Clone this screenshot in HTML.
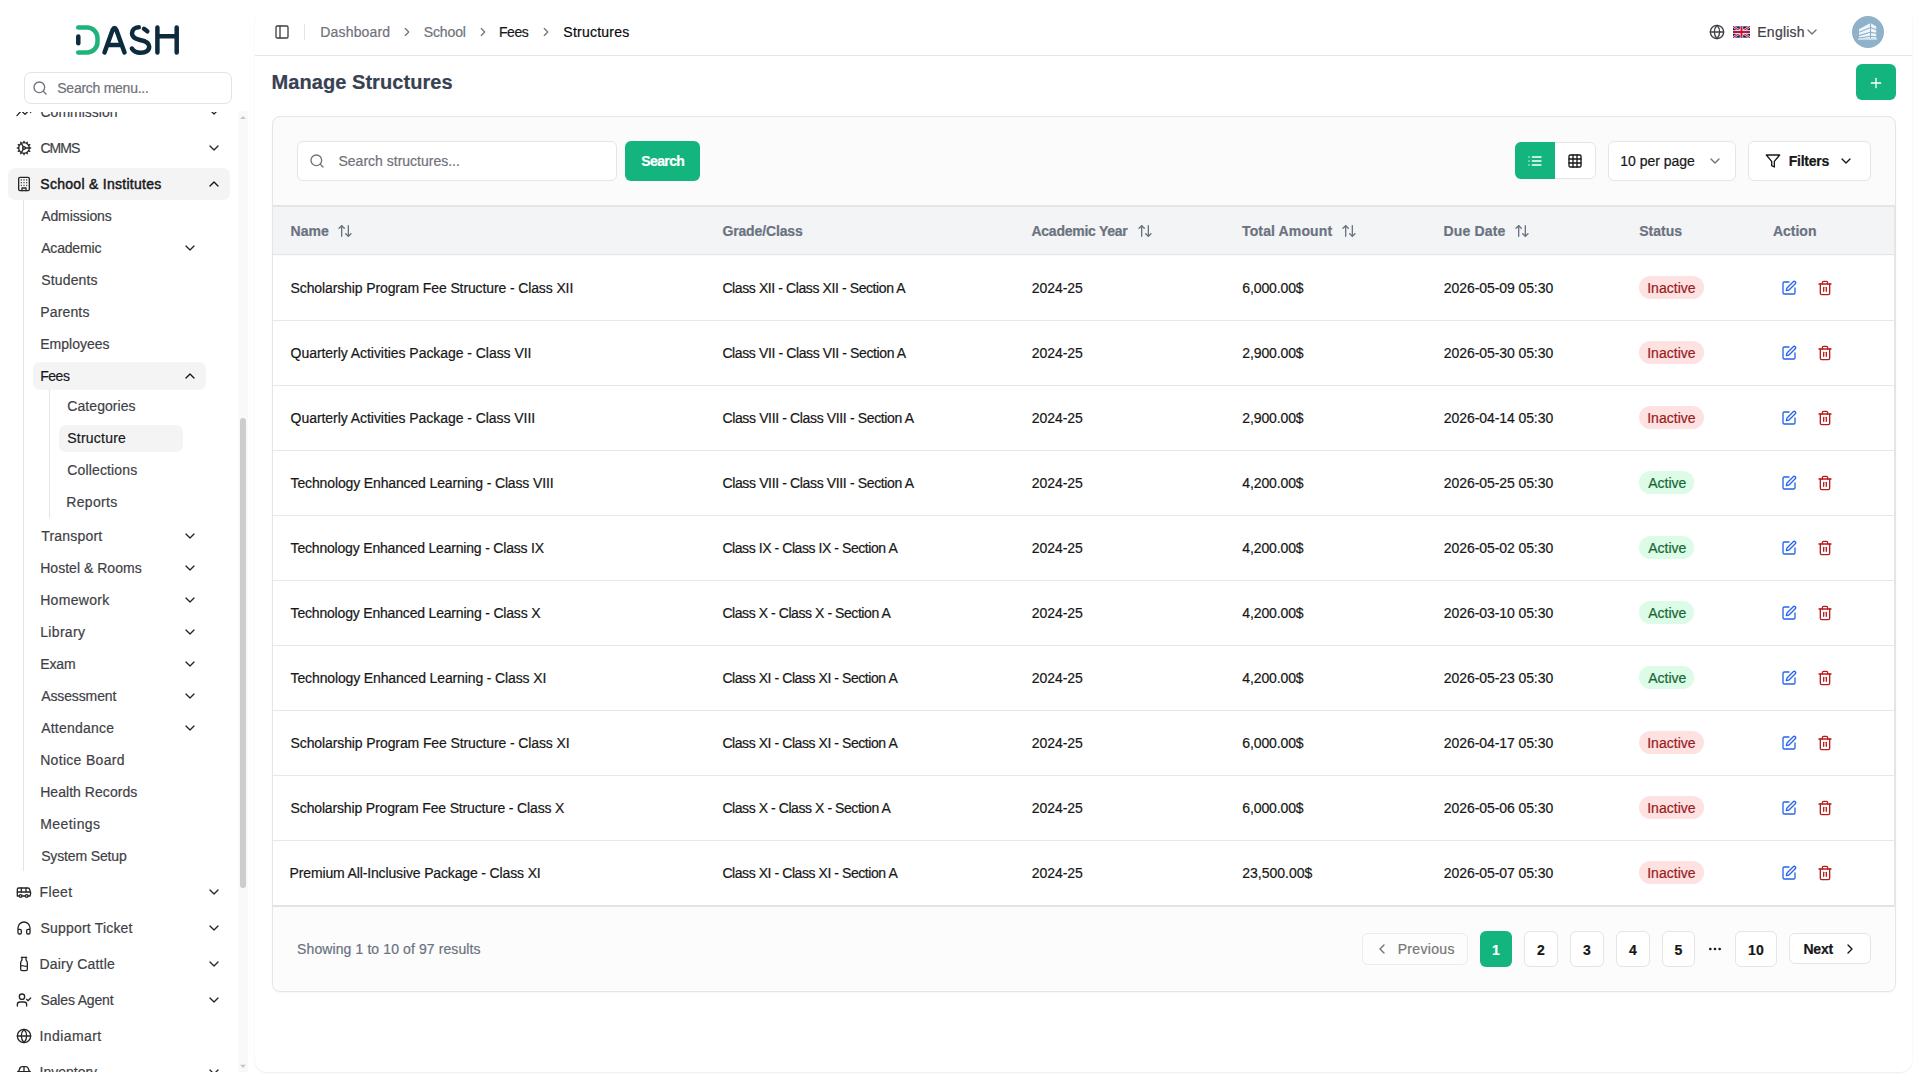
<!DOCTYPE html>
<html><head><meta charset="utf-8"><title>Manage Structures</title>
<style>
*{box-sizing:border-box;margin:0;padding:0}
html,body{width:1920px;height:1080px;overflow:hidden;background:#fff;font-family:"Liberation Sans",sans-serif;font-size:14px;color:#0a0a0a}
svg{display:block}
.abs{position:absolute}
.ic{fill:none;stroke:currentColor;stroke-width:2;stroke-linecap:round;stroke-linejoin:round}
/* sidebar */
#sb{position:absolute;left:0;top:0;width:255px;height:1080px;background:#fff}
#logo{position:absolute;left:0;top:0}
#msearch{position:absolute;left:24px;top:72px;width:208px;height:32px;border:1px solid #e4e4e7;border-radius:7px;background:#fff}
#msearch .ph{position:absolute;left:32px;top:7px;color:#71717a;font-size:14px}
#nav{position:absolute;left:0;top:112px;width:236px;height:960px;overflow:hidden}
.it{position:absolute;height:32px;line-height:32px;white-space:nowrap;color:#3f3f46}
.it .t{position:absolute;top:0}
.hl{background:#f4f4f5;border-radius:7px}
.l0 .t{left:32px}
.l0{left:8px;width:222px}
.l0 .i{position:absolute;left:8px;top:8px;width:16px;height:16px;color:#27272a}
.l0 .ch{position:absolute;left:198px;top:8px;width:16px;height:16px;color:#3f3f46}
.l1{left:33px;width:173px;height:28px;line-height:28px}
.l1 .t{left:8px}
.l1 .ch{position:absolute;left:148px;top:6px;width:16px;height:16px;color:#3f3f46}
.l2{left:59px;width:124px;height:27px;line-height:27px}
.l2 .t{left:8px}
.vline{position:absolute;width:1px;background:#e4e4e7}
#track{position:absolute;left:238px;top:111px;width:10px;height:961px;background:#f9f9f9}
#thumb{position:absolute;left:240px;top:418px;width:6px;height:470px;background:#cdcdcf;border-radius:3px}
/* main */
#main{position:absolute;left:255px;top:8px;width:1657px;height:1064px;background:#fff;border-radius:12px;box-shadow:0 1px 2px rgba(0,0,0,.08)}
#hdr{position:absolute;left:0;top:0;width:1657px;height:48px;border-bottom:1px solid #e5e5e5}
.bc{position:absolute;top:15px;font-size:14px;line-height:18px;color:#71717a;white-space:nowrap}
.tx{position:absolute;white-space:nowrap;-webkit-text-stroke:0.2px currentColor}
#layer{position:absolute;left:0;top:0;width:1920px;height:1080px}
</style></head>
<body>
<div id="sb">
  <svg id="logo" width="255" height="70" viewBox="0 0 255 70">
    <g fill="none" stroke-linecap="round" stroke-linejoin="round" stroke-width="4.5">
      <path d="M78.2 27.5 H87 A10.5 10.5 0 0 1 97.5 38 V42 A10.5 10.5 0 0 1 87 52.5 H78.2" stroke="#1fb27d"/>
      <path d="M78.3 36.4 V43.2" stroke="#0c2b3e"/>
      <path d="M104.5 52.5 L112.6 30 Q114.5 26.2 116.4 30 L124.5 52.5 M109.3 44.9 H119.7" stroke="#0c2b3e"/>
      <path d="M138.8 27.3 C134.5 27.4 132 30 132 33.5 C132 37.5 135.5 39 140 40 C145 41 149.2 42.5 149.2 46.5 C149.2 50.5 146 52.8 140.5 52.8 C136.5 52.8 133.5 51 131.9 48.5" stroke="#0c2b3e"/>
      <path d="M144 28.8 L147.3 31.3" stroke="#0c2b3e"/>
      <path d="M157.4 27.4 V52.6 M176.7 27.4 V52.6 M157.4 36.3 H176.7" stroke="#0c2b3e"/>
    </g>
  </svg>
  <div id="msearch">
    <svg class="abs ic" style="left:7px;top:7px;color:#71717a" width="16" height="16" viewBox="0 0 24 24"><circle cx="11" cy="11" r="8"/><path d="m21 21-4.3-4.3"/></svg>
    
  </div>
  <div id="nav">
    <svg class="ic abs" style="left:16px;top:-8px;color:#27272a;" width="16" height="16" viewBox="0 0 24 24" stroke-width="2"><path d="M1.4 17.4 L7.6 10.6"/><path d="M8.6 10.6 L13.5 15.6 L18.4 10.6"/><path d="M21.9 12.8h.01"/></svg>
<div class="tx" style="left:40.50px;top:-10.05px;font-size:14px;line-height:20px;font-weight:400;color:#3f3f46;">Commission</div>
<svg class="ic abs" style="left:206px;top:-8px;color:#27272a;" width="16" height="16" viewBox="0 0 24 24" stroke-width="2"><path d="m6 9 6 6 6-6"/></svg>
<svg class="ic abs" style="left:16px;top:28px;color:#27272a;" width="16" height="16" viewBox="0 0 24 24" stroke-width="2"><path d="M12 20a8 8 0 1 0 0-16 8 8 0 0 0 0 16Z"/><path d="M12 14a2 2 0 1 0 0-4 2 2 0 0 0 0 4Z"/><path d="M12 2v2"/><path d="M12 22v-2"/><path d="m17 20.66-1-1.73"/><path d="M11 10.27 7 3.34"/><path d="m20.66 17-1.73-1"/><path d="m3.34 7 1.73 1"/><path d="M14 12h8"/><path d="M2 12h2"/><path d="m20.66 7-1.73 1"/><path d="m3.34 17 1.73-1"/><path d="m17 3.34-1 1.73"/><path d="m11 13.73-4 6.93"/></svg>
<div class="tx" style="left:40.50px;top:25.95px;font-size:14px;line-height:20px;font-weight:400;color:#3f3f46;letter-spacing:-1.012px;">CMMS</div>
<svg class="ic abs" style="left:206px;top:28px;color:#27272a;" width="16" height="16" viewBox="0 0 24 24" stroke-width="2"><path d="m6 9 6 6 6-6"/></svg>
<div class="abs" style="left:8px;top:56px;width:222px;height:32px;background:#f4f4f5;border-radius:7px"></div>
<svg class="ic abs" style="left:16px;top:64px;color:#27272a;" width="16" height="16" viewBox="0 0 24 24" stroke-width="2"><rect width="16" height="20" x="4" y="2" rx="2" ry="2"/><path d="M9 22v-4h6v4"/><path d="M8 6h.01"/><path d="M16 6h.01"/><path d="M12 6h.01"/><path d="M12 10h.01"/><path d="M12 14h.01"/><path d="M16 10h.01"/><path d="M16 14h.01"/><path d="M8 10h.01"/><path d="M8 14h.01"/></svg>
<div class="tx" style="left:40.30px;top:61.95px;font-size:14px;line-height:20px;font-weight:400;color:#18181b;letter-spacing:0.280px;-webkit-text-stroke:0.45px #18181b;">School &amp; Institutes</div>
<svg class="ic abs" style="left:206px;top:64px;color:#18181b;" width="16" height="16" viewBox="0 0 24 24" stroke-width="2"><path d="m18 15-6-6-6 6"/></svg>
<div class="tx" style="left:41.20px;top:93.95px;font-size:14px;line-height:20px;font-weight:400;color:#3f3f46;letter-spacing:-0.109px;">Admissions</div>
<div class="tx" style="left:41.20px;top:125.95px;font-size:14px;line-height:20px;font-weight:400;color:#3f3f46;letter-spacing:-0.181px;">Academic</div>
<svg class="ic abs" style="left:182px;top:128px;color:#27272a;" width="16" height="16" viewBox="0 0 24 24" stroke-width="2"><path d="m6 9 6 6 6-6"/></svg>
<div class="tx" style="left:41.20px;top:157.95px;font-size:14px;line-height:20px;font-weight:400;color:#3f3f46;letter-spacing:0.163px;">Students</div>
<div class="tx" style="left:40.20px;top:189.95px;font-size:14px;line-height:20px;font-weight:400;color:#3f3f46;letter-spacing:0.159px;">Parents</div>
<div class="tx" style="left:40.20px;top:221.95px;font-size:14px;line-height:20px;font-weight:400;color:#3f3f46;letter-spacing:0.018px;">Employees</div>
<div class="abs" style="left:33px;top:250px;width:173px;height:28px;background:#f4f4f5;border-radius:7px"></div>
<div class="tx" style="left:40.20px;top:253.95px;font-size:14px;line-height:20px;font-weight:400;color:#18181b;letter-spacing:-0.475px;">Fees</div>
<svg class="ic abs" style="left:182px;top:256px;color:#18181b;" width="16" height="16" viewBox="0 0 24 24" stroke-width="2"><path d="m18 15-6-6-6 6"/></svg>
<div class="tx" style="left:67.30px;top:283.95px;font-size:14px;line-height:20px;font-weight:400;color:#3f3f46;letter-spacing:0.066px;">Categories</div>
<div class="abs" style="left:59px;top:312.5px;width:124px;height:27px;background:#f4f4f5;border-radius:7px"></div>
<div class="tx" style="left:67.30px;top:315.95px;font-size:14px;line-height:20px;font-weight:400;color:#18181b;letter-spacing:0.223px;">Structure</div>
<div class="tx" style="left:67.30px;top:347.95px;font-size:14px;line-height:20px;font-weight:400;color:#3f3f46;letter-spacing:0.142px;">Collections</div>
<div class="tx" style="left:66.30px;top:379.95px;font-size:14px;line-height:20px;font-weight:400;color:#3f3f46;letter-spacing:0.330px;">Reports</div>
<div class="tx" style="left:41.20px;top:413.95px;font-size:14px;line-height:20px;font-weight:400;color:#3f3f46;letter-spacing:0.200px;">Transport</div>
<svg class="ic abs" style="left:182px;top:416px;color:#27272a;" width="16" height="16" viewBox="0 0 24 24" stroke-width="2"><path d="m6 9 6 6 6-6"/></svg>
<div class="tx" style="left:40.20px;top:445.95px;font-size:14px;line-height:20px;font-weight:400;color:#3f3f46;letter-spacing:0.027px;">Hostel &amp; Rooms</div>
<svg class="ic abs" style="left:182px;top:448px;color:#27272a;" width="16" height="16" viewBox="0 0 24 24" stroke-width="2"><path d="m6 9 6 6 6-6"/></svg>
<div class="tx" style="left:40.20px;top:477.95px;font-size:14px;line-height:20px;font-weight:400;color:#3f3f46;letter-spacing:0.300px;">Homework</div>
<svg class="ic abs" style="left:182px;top:480px;color:#27272a;" width="16" height="16" viewBox="0 0 24 24" stroke-width="2"><path d="m6 9 6 6 6-6"/></svg>
<div class="tx" style="left:40.20px;top:509.95px;font-size:14px;line-height:20px;font-weight:400;color:#3f3f46;letter-spacing:0.335px;">Library</div>
<svg class="ic abs" style="left:182px;top:512px;color:#27272a;" width="16" height="16" viewBox="0 0 24 24" stroke-width="2"><path d="m6 9 6 6 6-6"/></svg>
<div class="tx" style="left:40.20px;top:541.95px;font-size:14px;line-height:20px;font-weight:400;color:#3f3f46;letter-spacing:-0.141px;">Exam</div>
<svg class="ic abs" style="left:182px;top:544px;color:#27272a;" width="16" height="16" viewBox="0 0 24 24" stroke-width="2"><path d="m6 9 6 6 6-6"/></svg>
<div class="tx" style="left:41.20px;top:573.95px;font-size:14px;line-height:20px;font-weight:400;color:#3f3f46;letter-spacing:-0.118px;">Assessment</div>
<svg class="ic abs" style="left:182px;top:576px;color:#27272a;" width="16" height="16" viewBox="0 0 24 24" stroke-width="2"><path d="m6 9 6 6 6-6"/></svg>
<div class="tx" style="left:41.20px;top:605.95px;font-size:14px;line-height:20px;font-weight:400;color:#3f3f46;letter-spacing:0.228px;">Attendance</div>
<svg class="ic abs" style="left:182px;top:608px;color:#27272a;" width="16" height="16" viewBox="0 0 24 24" stroke-width="2"><path d="m6 9 6 6 6-6"/></svg>
<div class="tx" style="left:40.20px;top:637.95px;font-size:14px;line-height:20px;font-weight:400;color:#3f3f46;letter-spacing:0.305px;">Notice Board</div>
<div class="tx" style="left:40.20px;top:669.95px;font-size:14px;line-height:20px;font-weight:400;color:#3f3f46;letter-spacing:0.047px;">Health Records</div>
<div class="tx" style="left:40.20px;top:701.95px;font-size:14px;line-height:20px;font-weight:400;color:#3f3f46;letter-spacing:0.442px;">Meetings</div>
<div class="tx" style="left:41.20px;top:733.95px;font-size:14px;line-height:20px;font-weight:400;color:#3f3f46;letter-spacing:-0.151px;">System Setup</div>
<svg class="ic abs" style="left:16px;top:772px;color:#27272a;" width="16" height="16" viewBox="0 0 24 24" stroke-width="2"><path d="M8 6v6"/><path d="M15 6v6"/><path d="M2 12h19.6"/><path d="M18 18h3s.5-1.7.8-2.8c.1-.4.2-.8.2-1.2 0-.4-.1-.8-.2-1.2l-1.4-5C20.1 6.8 19.1 6 18 6H4a2 2 0 0 0-2 2v10h3"/><circle cx="7" cy="18" r="2"/><path d="M9 18h5"/><circle cx="16" cy="18" r="2"/></svg>
<div class="tx" style="left:39.50px;top:769.95px;font-size:14px;line-height:20px;font-weight:400;color:#3f3f46;letter-spacing:0.391px;">Fleet</div>
<svg class="ic abs" style="left:206px;top:772px;color:#27272a;" width="16" height="16" viewBox="0 0 24 24" stroke-width="2"><path d="m6 9 6 6 6-6"/></svg>
<svg class="ic abs" style="left:16px;top:808px;color:#27272a;" width="16" height="16" viewBox="0 0 24 24" stroke-width="2"><path d="M3 14h3a2 2 0 0 1 2 2v3a2 2 0 0 1-2 2H5a2 2 0 0 1-2-2v-7a9 9 0 0 1 18 0v7a2 2 0 0 1-2 2h-1a2 2 0 0 1-2-2v-3a2 2 0 0 1 2-2h3"/></svg>
<div class="tx" style="left:40.50px;top:805.95px;font-size:14px;line-height:20px;font-weight:400;color:#3f3f46;letter-spacing:0.188px;">Support Ticket</div>
<svg class="ic abs" style="left:206px;top:808px;color:#27272a;" width="16" height="16" viewBox="0 0 24 24" stroke-width="2"><path d="m6 9 6 6 6-6"/></svg>
<svg class="ic abs" style="left:16px;top:844px;color:#27272a;" width="16" height="16" viewBox="0 0 24 24" stroke-width="2"><path d="M8 2h8"/><path d="M9 2v2.789a4 4 0 0 1-.672 2.219l-.656.984A4 4 0 0 0 7 10.212V20a2 2 0 0 0 2 2h6a2 2 0 0 0 2-2v-9.789a4 4 0 0 0-.672-2.219l-.656-.984A4 4 0 0 1 15 4.788V2"/><path d="M7 15a6.472 6.472 0 0 1 5 0 6.47 6.47 0 0 0 5 0"/></svg>
<div class="tx" style="left:39.50px;top:841.95px;font-size:14px;line-height:20px;font-weight:400;color:#3f3f46;letter-spacing:0.196px;">Dairy Cattle</div>
<svg class="ic abs" style="left:206px;top:844px;color:#27272a;" width="16" height="16" viewBox="0 0 24 24" stroke-width="2"><path d="m6 9 6 6 6-6"/></svg>
<svg class="ic abs" style="left:16px;top:880px;color:#27272a;" width="16" height="16" viewBox="0 0 24 24" stroke-width="2"><path d="M16 21v-2a4 4 0 0 0-4-4H6a4 4 0 0 0-4 4v2"/><circle cx="9" cy="7" r="4"/><polyline points="16 11 18 13 22 9"/></svg>
<div class="tx" style="left:40.50px;top:877.95px;font-size:14px;line-height:20px;font-weight:400;color:#3f3f46;letter-spacing:-0.161px;">Sales Agent</div>
<svg class="ic abs" style="left:206px;top:880px;color:#27272a;" width="16" height="16" viewBox="0 0 24 24" stroke-width="2"><path d="m6 9 6 6 6-6"/></svg>
<svg class="ic abs" style="left:16px;top:916px;color:#27272a;" width="16" height="16" viewBox="0 0 24 24" stroke-width="2"><circle cx="12" cy="12" r="10"/><path d="M12 2a14.5 14.5 0 0 0 0 20 14.5 14.5 0 0 0 0-20"/><path d="M2 12h20"/></svg>
<div class="tx" style="left:39.50px;top:913.95px;font-size:14px;line-height:20px;font-weight:400;color:#3f3f46;letter-spacing:0.404px;">Indiamart</div>
<svg class="ic abs" style="left:16px;top:952px;color:#27272a;" width="16" height="16" viewBox="0 0 24 24" stroke-width="2"><path d="M6 6 Q7 4 9 4 H15 Q17 4 18 6 L20.5 12"/><path d="M3.5 12 L6 6"/><path d="M3 11.5 H21"/><path d="M12 4 V11.5"/><path d="M3 11 V14 M21 11 V14"/></svg>
<div class="tx" style="left:39.50px;top:949.95px;font-size:14px;line-height:20px;font-weight:400;color:#3f3f46;">Inventory</div>
<svg class="ic abs" style="left:206px;top:952px;color:#27272a;" width="16" height="16" viewBox="0 0 24 24" stroke-width="2"><path d="m6 9 6 6 6-6"/></svg>
<div class="abs" style="left:23px;top:88px;width:1px;height:671px;background:#e4e4e7"></div>
<div class="abs" style="left:49px;top:278px;width:1px;height:128px;background:#e4e4e7"></div>
  </div>
  <div id="track"></div>
  <div id="thumb"></div>
  <svg class="abs" style="left:238px;top:109px" width="10" height="963" viewBox="0 0 10 963"><path d="M2.2 10.1 L5 7 L7.8 10.1 Z" fill="#c4c4c4"/><path d="M2.2 955.8 L5 958.9 L7.8 955.8 Z" fill="#c4c4c4"/></svg>
</div>
<div id="main">
  <div id="hdr">
    <!-- HDR -->
  </div>
  
</div>
<div id="layer"><div class="tx" style="left:57.30px;top:77.65px;font-size:14px;line-height:20px;font-weight:400;color:#71717a;letter-spacing:-0.265px;">Search menu...</div>
<svg class="ic abs" style="left:274px;top:24px;color:#3f3f46;" width="16" height="16" viewBox="0 0 24 24" stroke-width="2"><rect width="18" height="18" x="3" y="3" rx="2"/><path d="M9 3v18"/></svg>
<div class="abs" style="left:304px;top:24px;width:1px;height:16px;background:#e4e4e7"></div>
<div class="tx" style="left:320.30px;top:22.45px;font-size:14px;line-height:20px;font-weight:400;color:#71717a;letter-spacing:0.162px;">Dashboard</div>
<svg class="ic abs" style="left:400px;top:25px;color:#71717a;" width="14" height="14" viewBox="0 0 24 24" stroke-width="2"><path d="m9 18 6-6-6-6"/></svg>
<div class="tx" style="left:423.80px;top:22.45px;font-size:14px;line-height:20px;font-weight:400;color:#71717a;letter-spacing:-0.139px;">School</div>
<svg class="ic abs" style="left:476px;top:25px;color:#71717a;" width="14" height="14" viewBox="0 0 24 24" stroke-width="2"><path d="m9 18 6-6-6-6"/></svg>
<div class="tx" style="left:499.00px;top:22.45px;font-size:14px;line-height:20px;font-weight:400;color:#18181b;letter-spacing:-0.475px;">Fees</div>
<svg class="ic abs" style="left:539px;top:25px;color:#71717a;" width="14" height="14" viewBox="0 0 24 24" stroke-width="2"><path d="m9 18 6-6-6-6"/></svg>
<div class="tx" style="left:563.30px;top:22.45px;font-size:14px;line-height:20px;font-weight:400;color:#0a0a0a;letter-spacing:0.244px;">Structures</div>
<svg class="ic abs" style="left:1708.8px;top:24.3px;color:#3f3f46;" width="16" height="16" viewBox="0 0 24 24" stroke-width="2"><circle cx="12" cy="12" r="10"/><path d="M12 2a14.5 14.5 0 0 0 0 20 14.5 14.5 0 0 0 0-20"/><path d="M2 12h20"/></svg>
<svg class="abs" style="left:1733px;top:26px" width="17" height="12" viewBox="0 0 60 40"><rect width="60" height="40" fill="#012169"/><path d="M0 0L60 40M60 0L0 40" stroke="#fff" stroke-width="8"/><path d="M0 0L60 40M60 0L0 40" stroke="#C8102E" stroke-width="4"/><path d="M30 0V40M0 20H60" stroke="#fff" stroke-width="12"/><path d="M30 0V40M0 20H60" stroke="#C8102E" stroke-width="7"/></svg>
<div class="tx" style="left:1757.30px;top:22.45px;font-size:14px;line-height:20px;font-weight:400;color:#3f3f46;letter-spacing:0.228px;">English</div>
<svg class="ic abs" style="left:1804.3px;top:23.7px;color:#71717a;" width="16" height="16" viewBox="0 0 24 24" stroke-width="1.5"><path d="m6 9 6 6 6-6"/></svg>
<svg class="abs" style="left:1852px;top:16px" width="32" height="32" viewBox="0 0 32 32"><circle cx="16" cy="16" r="16" fill="#8fb1c9"/><path d="M7 13.2 L18.5 7 L24.2 10.4 V22.4 H7 Z" fill="#eef7fb"/><g fill="none" stroke="#8fb1c9" stroke-width="1.1"><path d="M6.5 16.6 L18.5 11.6 L24.5 13.8"/><path d="M6.5 19.6 L18.5 16.2 L24.5 17.4"/><path d="M6.5 22 L18.5 20.2 L24.5 20.8"/><path d="M18.5 7 V22.4"/></g><path d="M6 23.1 H25" stroke="#eef7fb" stroke-width="1"/></svg>
<div class="tx" style="left:271.50px;top:68.57px;font-size:20px;line-height:26px;font-weight:700;color:#374151;letter-spacing:0.067px;">Manage Structures</div>
<div class="abs" style="left:1856px;top:64px;width:40px;height:36px;background:#14b47f;border-radius:6px"></div>
<svg class="ic abs" style="left:1868px;top:75px;color:#fff;" width="16" height="16" viewBox="0 0 24 24" stroke-width="2"><path d="M5 12h14"/><path d="M12 5v14"/></svg>
<div class="abs" style="left:272px;top:116px;width:1624px;height:876px;border:1px solid #e5e5e5;border-radius:8px;background:#fbfbfb;box-shadow:0 1px 2px rgba(0,0,0,.04)"></div>
<div class="abs" style="left:273px;top:907px;width:1622px;height:84px;background:#fcfcfc;border-radius:0 0 7px 7px"></div>
<div class="abs" style="left:297px;top:141px;width:320px;height:40px;background:#fff;border:1px solid #e5e5e5;border-radius:6px"></div>
<svg class="ic abs" style="left:309px;top:153px;color:#71717a;" width="16" height="16" viewBox="0 0 24 24" stroke-width="2"><circle cx="11" cy="11" r="8"/><path d="m21 21-4.3-4.3"/></svg>
<div class="tx" style="left:338.50px;top:151.45px;font-size:14px;line-height:20px;font-weight:400;color:#71717a;">Search structures...</div>
<div class="abs" style="left:625px;top:141px;width:75px;height:40px;background:#14b47f;border-radius:6px"></div>
<div class="tx" style="left:641.30px;top:151.45px;font-size:14px;line-height:20px;font-weight:700;color:#fff;letter-spacing:-0.629px;">Search</div>
<div class="abs" style="left:1515px;top:142px;width:81px;height:37px;background:#fff;border:1px solid #e5e5e5;border-radius:6px"></div>
<div class="abs" style="left:1515px;top:142px;width:40px;height:37px;background:#14b47f;border-radius:6px 0 0 6px"></div>
<svg class="ic abs" style="left:1526.5px;top:152.5px;color:#fff;" width="16" height="16" viewBox="0 0 24 24" stroke-width="2"><path d="M3 12h.01"/><path d="M3 18h.01"/><path d="M3 6h.01"/><path d="M8 12h13"/><path d="M8 18h13"/><path d="M8 6h13"/></svg>
<svg class="ic abs" style="left:1566.5px;top:152.5px;color:#171717;" width="16" height="16" viewBox="0 0 24 24" stroke-width="2.2"><rect width="18" height="18" x="3" y="3" rx="2"/><path d="M3 9h18"/><path d="M3 15h18"/><path d="M9 3v18"/><path d="M15 3v18"/></svg>
<div class="abs" style="left:1608px;top:141px;width:128px;height:40px;background:#fff;border:1px solid #e5e5e5;border-radius:6px"></div>
<div class="tx" style="left:1620.30px;top:151.45px;font-size:14px;line-height:20px;font-weight:400;color:#171717;letter-spacing:-0.024px;">10 per page</div>
<svg class="ic abs" style="left:1706.7px;top:152.6px;color:#71717a;" width="16" height="16" viewBox="0 0 24 24" stroke-width="1.6"><path d="m6 9 6 6 6-6"/></svg>
<div class="abs" style="left:1748px;top:141px;width:123px;height:40px;background:#fff;border:1px solid #e5e5e5;border-radius:6px"></div>
<svg class="ic abs" style="left:1765px;top:152.5px;color:#171717;" width="16" height="16" viewBox="0 0 24 24" stroke-width="2"><polygon points="22 3 2 3 10 12.46 10 19 14 21 14 12.46 22 3"/></svg>
<div class="tx" style="left:1788.70px;top:151.45px;font-size:14px;line-height:20px;font-weight:700;color:#171717;letter-spacing:-0.238px;">Filters</div>
<svg class="ic abs" style="left:1837.5px;top:153px;color:#171717;" width="16" height="16" viewBox="0 0 24 24" stroke-width="2"><path d="m6 9 6 6 6-6"/></svg>
<div class="abs" style="left:273px;top:205px;width:1622px;height:50px;background:#f3f4f6;border-top:2px solid #e5e5e5;border-bottom:1px solid #e5e5e5"></div>
<div class="tx" style="left:290.60px;top:221.45px;font-size:14px;line-height:20px;font-weight:700;color:#6b7280;">Name</div>
<svg class="ic abs" style="left:336.7px;top:222.5px;color:#6b7280;" width="16" height="16" viewBox="0 0 24 24" stroke-width="2"><path d="m21 16-4 4-4-4"/><path d="M17 20V4"/><path d="m3 8 4-4 4 4"/><path d="M7 4v16"/></svg>
<div class="tx" style="left:722.40px;top:221.45px;font-size:14px;line-height:20px;font-weight:700;color:#6b7280;letter-spacing:-0.132px;">Grade/Class</div>
<div class="tx" style="left:1031.50px;top:221.45px;font-size:14px;line-height:20px;font-weight:700;color:#6b7280;letter-spacing:-0.264px;">Academic Year</div>
<svg class="ic abs" style="left:1136.7px;top:222.5px;color:#6b7280;" width="16" height="16" viewBox="0 0 24 24" stroke-width="2"><path d="m21 16-4 4-4-4"/><path d="M17 20V4"/><path d="m3 8 4-4 4 4"/><path d="M7 4v16"/></svg>
<div class="tx" style="left:1242.00px;top:221.45px;font-size:14px;line-height:20px;font-weight:700;color:#6b7280;letter-spacing:0.136px;">Total Amount</div>
<svg class="ic abs" style="left:1340.7px;top:222.5px;color:#6b7280;" width="16" height="16" viewBox="0 0 24 24" stroke-width="2"><path d="m21 16-4 4-4-4"/><path d="M17 20V4"/><path d="m3 8 4-4 4 4"/><path d="M7 4v16"/></svg>
<div class="tx" style="left:1443.50px;top:221.45px;font-size:14px;line-height:20px;font-weight:700;color:#6b7280;letter-spacing:0.158px;">Due Date</div>
<svg class="ic abs" style="left:1513.7px;top:222.5px;color:#6b7280;" width="16" height="16" viewBox="0 0 24 24" stroke-width="2"><path d="m21 16-4 4-4-4"/><path d="M17 20V4"/><path d="m3 8 4-4 4 4"/><path d="M7 4v16"/></svg>
<div class="tx" style="left:1639.20px;top:221.45px;font-size:14px;line-height:20px;font-weight:700;color:#6b7280;">Status</div>
<div class="tx" style="left:1772.90px;top:221.45px;font-size:14px;line-height:20px;font-weight:700;color:#6b7280;">Action</div>
<div class="abs" style="left:273px;top:256px;width:1622px;height:65px;background:#fff;border-bottom:1px solid #e8e8e8"></div>
<div class="tx" style="left:290.60px;top:278.45px;font-size:14px;line-height:20px;font-weight:400;color:#171717;letter-spacing:-0.118px;">Scholarship Program Fee Structure - Class XII</div>
<div class="tx" style="left:722.40px;top:278.45px;font-size:14px;line-height:20px;font-weight:400;color:#171717;letter-spacing:-0.400px;">Class XII - Class XII - Section A</div>
<div class="tx" style="left:1031.80px;top:278.45px;font-size:14px;line-height:20px;font-weight:400;color:#171717;letter-spacing:-0.065px;">2024-25</div>
<div class="tx" style="left:1242.30px;top:278.45px;font-size:14px;line-height:20px;font-weight:400;color:#171717;letter-spacing:-0.125px;">6,000.00$</div>
<div class="tx" style="left:1443.80px;top:278.45px;font-size:14px;line-height:20px;font-weight:400;color:#171717;letter-spacing:-0.077px;">2026-05-09 05:30</div>
<div class="abs" style="left:1639px;top:276px;width:65px;height:23px;background:#fee2e2;border-radius:12px"></div>
<div class="tx" style="left:1647.20px;top:278.45px;font-size:14px;line-height:20px;font-weight:400;color:#991b1b;letter-spacing:0.020px;">Inactive</div>
<svg class="ic abs" style="left:1781px;top:280px;color:#2563eb;" width="16" height="16" viewBox="0 0 24 24" stroke-width="2"><path d="M12 3H5a2 2 0 0 0-2 2v14a2 2 0 0 0 2 2h14a2 2 0 0 0 2-2v-7"/><path d="M18.375 2.625a1 1 0 0 1 3 3l-9.013 9.014a2 2 0 0 1-.853.505l-2.873.84a.5.5 0 0 1-.62-.62l.84-2.873a2 2 0 0 1 .506-.852z"/></svg>
<svg class="ic abs" style="left:1817px;top:280px;color:#b91c1c;" width="16" height="16" viewBox="0 0 24 24" stroke-width="2"><path d="M3 6h18"/><path d="M19 6v14c0 1-1 2-2 2H7c-1 0-2-1-2-2V6"/><path d="M8 6V4c0-1 1-2 2-2h4c1 0 2 1 2 2v2"/><line x1="10" x2="10" y1="11" y2="17"/><line x1="14" x2="14" y1="11" y2="17"/></svg>
<div class="abs" style="left:273px;top:321px;width:1622px;height:65px;background:#fff;border-bottom:1px solid #e8e8e8"></div>
<div class="tx" style="left:290.60px;top:343.45px;font-size:14px;line-height:20px;font-weight:400;color:#171717;letter-spacing:-0.050px;">Quarterly Activities Package - Class VII</div>
<div class="tx" style="left:722.40px;top:343.45px;font-size:14px;line-height:20px;font-weight:400;color:#171717;letter-spacing:-0.384px;">Class VII - Class VII - Section A</div>
<div class="tx" style="left:1031.80px;top:343.45px;font-size:14px;line-height:20px;font-weight:400;color:#171717;letter-spacing:-0.065px;">2024-25</div>
<div class="tx" style="left:1242.30px;top:343.45px;font-size:14px;line-height:20px;font-weight:400;color:#171717;letter-spacing:-0.125px;">2,900.00$</div>
<div class="tx" style="left:1443.80px;top:343.45px;font-size:14px;line-height:20px;font-weight:400;color:#171717;letter-spacing:-0.077px;">2026-05-30 05:30</div>
<div class="abs" style="left:1639px;top:341px;width:65px;height:23px;background:#fee2e2;border-radius:12px"></div>
<div class="tx" style="left:1647.20px;top:343.45px;font-size:14px;line-height:20px;font-weight:400;color:#991b1b;letter-spacing:0.020px;">Inactive</div>
<svg class="ic abs" style="left:1781px;top:345px;color:#2563eb;" width="16" height="16" viewBox="0 0 24 24" stroke-width="2"><path d="M12 3H5a2 2 0 0 0-2 2v14a2 2 0 0 0 2 2h14a2 2 0 0 0 2-2v-7"/><path d="M18.375 2.625a1 1 0 0 1 3 3l-9.013 9.014a2 2 0 0 1-.853.505l-2.873.84a.5.5 0 0 1-.62-.62l.84-2.873a2 2 0 0 1 .506-.852z"/></svg>
<svg class="ic abs" style="left:1817px;top:345px;color:#b91c1c;" width="16" height="16" viewBox="0 0 24 24" stroke-width="2"><path d="M3 6h18"/><path d="M19 6v14c0 1-1 2-2 2H7c-1 0-2-1-2-2V6"/><path d="M8 6V4c0-1 1-2 2-2h4c1 0 2 1 2 2v2"/><line x1="10" x2="10" y1="11" y2="17"/><line x1="14" x2="14" y1="11" y2="17"/></svg>
<div class="abs" style="left:273px;top:386px;width:1622px;height:65px;background:#fff;border-bottom:1px solid #e8e8e8"></div>
<div class="tx" style="left:290.60px;top:408.45px;font-size:14px;line-height:20px;font-weight:400;color:#171717;letter-spacing:-0.053px;">Quarterly Activities Package - Class VIII</div>
<div class="tx" style="left:722.40px;top:408.45px;font-size:14px;line-height:20px;font-weight:400;color:#171717;letter-spacing:-0.358px;">Class VIII - Class VIII - Section A</div>
<div class="tx" style="left:1031.80px;top:408.45px;font-size:14px;line-height:20px;font-weight:400;color:#171717;letter-spacing:-0.065px;">2024-25</div>
<div class="tx" style="left:1242.30px;top:408.45px;font-size:14px;line-height:20px;font-weight:400;color:#171717;letter-spacing:-0.125px;">2,900.00$</div>
<div class="tx" style="left:1443.80px;top:408.45px;font-size:14px;line-height:20px;font-weight:400;color:#171717;letter-spacing:-0.077px;">2026-04-14 05:30</div>
<div class="abs" style="left:1639px;top:406px;width:65px;height:23px;background:#fee2e2;border-radius:12px"></div>
<div class="tx" style="left:1647.20px;top:408.45px;font-size:14px;line-height:20px;font-weight:400;color:#991b1b;letter-spacing:0.020px;">Inactive</div>
<svg class="ic abs" style="left:1781px;top:410px;color:#2563eb;" width="16" height="16" viewBox="0 0 24 24" stroke-width="2"><path d="M12 3H5a2 2 0 0 0-2 2v14a2 2 0 0 0 2 2h14a2 2 0 0 0 2-2v-7"/><path d="M18.375 2.625a1 1 0 0 1 3 3l-9.013 9.014a2 2 0 0 1-.853.505l-2.873.84a.5.5 0 0 1-.62-.62l.84-2.873a2 2 0 0 1 .506-.852z"/></svg>
<svg class="ic abs" style="left:1817px;top:410px;color:#b91c1c;" width="16" height="16" viewBox="0 0 24 24" stroke-width="2"><path d="M3 6h18"/><path d="M19 6v14c0 1-1 2-2 2H7c-1 0-2-1-2-2V6"/><path d="M8 6V4c0-1 1-2 2-2h4c1 0 2 1 2 2v2"/><line x1="10" x2="10" y1="11" y2="17"/><line x1="14" x2="14" y1="11" y2="17"/></svg>
<div class="abs" style="left:273px;top:451px;width:1622px;height:65px;background:#fff;border-bottom:1px solid #e8e8e8"></div>
<div class="tx" style="left:290.60px;top:473.45px;font-size:14px;line-height:20px;font-weight:400;color:#171717;letter-spacing:-0.138px;">Technology Enhanced Learning - Class VIII</div>
<div class="tx" style="left:722.40px;top:473.45px;font-size:14px;line-height:20px;font-weight:400;color:#171717;letter-spacing:-0.358px;">Class VIII - Class VIII - Section A</div>
<div class="tx" style="left:1031.80px;top:473.45px;font-size:14px;line-height:20px;font-weight:400;color:#171717;letter-spacing:-0.065px;">2024-25</div>
<div class="tx" style="left:1242.30px;top:473.45px;font-size:14px;line-height:20px;font-weight:400;color:#171717;letter-spacing:-0.125px;">4,200.00$</div>
<div class="tx" style="left:1443.80px;top:473.45px;font-size:14px;line-height:20px;font-weight:400;color:#171717;letter-spacing:-0.077px;">2026-05-25 05:30</div>
<div class="abs" style="left:1639px;top:471px;width:55px;height:23px;background:#dcfce7;border-radius:12px"></div>
<div class="tx" style="left:1648.20px;top:473.45px;font-size:14px;line-height:20px;font-weight:400;color:#166534;">Active</div>
<svg class="ic abs" style="left:1781px;top:475px;color:#2563eb;" width="16" height="16" viewBox="0 0 24 24" stroke-width="2"><path d="M12 3H5a2 2 0 0 0-2 2v14a2 2 0 0 0 2 2h14a2 2 0 0 0 2-2v-7"/><path d="M18.375 2.625a1 1 0 0 1 3 3l-9.013 9.014a2 2 0 0 1-.853.505l-2.873.84a.5.5 0 0 1-.62-.62l.84-2.873a2 2 0 0 1 .506-.852z"/></svg>
<svg class="ic abs" style="left:1817px;top:475px;color:#b91c1c;" width="16" height="16" viewBox="0 0 24 24" stroke-width="2"><path d="M3 6h18"/><path d="M19 6v14c0 1-1 2-2 2H7c-1 0-2-1-2-2V6"/><path d="M8 6V4c0-1 1-2 2-2h4c1 0 2 1 2 2v2"/><line x1="10" x2="10" y1="11" y2="17"/><line x1="14" x2="14" y1="11" y2="17"/></svg>
<div class="abs" style="left:273px;top:516px;width:1622px;height:65px;background:#fff;border-bottom:1px solid #e8e8e8"></div>
<div class="tx" style="left:290.60px;top:538.45px;font-size:14px;line-height:20px;font-weight:400;color:#171717;letter-spacing:-0.189px;">Technology Enhanced Learning - Class IX</div>
<div class="tx" style="left:722.40px;top:538.45px;font-size:14px;line-height:20px;font-weight:400;color:#171717;letter-spacing:-0.431px;">Class IX - Class IX - Section A</div>
<div class="tx" style="left:1031.80px;top:538.45px;font-size:14px;line-height:20px;font-weight:400;color:#171717;letter-spacing:-0.065px;">2024-25</div>
<div class="tx" style="left:1242.30px;top:538.45px;font-size:14px;line-height:20px;font-weight:400;color:#171717;letter-spacing:-0.125px;">4,200.00$</div>
<div class="tx" style="left:1443.80px;top:538.45px;font-size:14px;line-height:20px;font-weight:400;color:#171717;letter-spacing:-0.077px;">2026-05-02 05:30</div>
<div class="abs" style="left:1639px;top:536px;width:55px;height:23px;background:#dcfce7;border-radius:12px"></div>
<div class="tx" style="left:1648.20px;top:538.45px;font-size:14px;line-height:20px;font-weight:400;color:#166534;">Active</div>
<svg class="ic abs" style="left:1781px;top:540px;color:#2563eb;" width="16" height="16" viewBox="0 0 24 24" stroke-width="2"><path d="M12 3H5a2 2 0 0 0-2 2v14a2 2 0 0 0 2 2h14a2 2 0 0 0 2-2v-7"/><path d="M18.375 2.625a1 1 0 0 1 3 3l-9.013 9.014a2 2 0 0 1-.853.505l-2.873.84a.5.5 0 0 1-.62-.62l.84-2.873a2 2 0 0 1 .506-.852z"/></svg>
<svg class="ic abs" style="left:1817px;top:540px;color:#b91c1c;" width="16" height="16" viewBox="0 0 24 24" stroke-width="2"><path d="M3 6h18"/><path d="M19 6v14c0 1-1 2-2 2H7c-1 0-2-1-2-2V6"/><path d="M8 6V4c0-1 1-2 2-2h4c1 0 2 1 2 2v2"/><line x1="10" x2="10" y1="11" y2="17"/><line x1="14" x2="14" y1="11" y2="17"/></svg>
<div class="abs" style="left:273px;top:581px;width:1622px;height:65px;background:#fff;border-bottom:1px solid #e8e8e8"></div>
<div class="tx" style="left:290.60px;top:603.45px;font-size:14px;line-height:20px;font-weight:400;color:#171717;letter-spacing:-0.186px;">Technology Enhanced Learning - Class X</div>
<div class="tx" style="left:722.40px;top:603.45px;font-size:14px;line-height:20px;font-weight:400;color:#171717;letter-spacing:-0.433px;">Class X - Class X - Section A</div>
<div class="tx" style="left:1031.80px;top:603.45px;font-size:14px;line-height:20px;font-weight:400;color:#171717;letter-spacing:-0.065px;">2024-25</div>
<div class="tx" style="left:1242.30px;top:603.45px;font-size:14px;line-height:20px;font-weight:400;color:#171717;letter-spacing:-0.125px;">4,200.00$</div>
<div class="tx" style="left:1443.80px;top:603.45px;font-size:14px;line-height:20px;font-weight:400;color:#171717;letter-spacing:-0.077px;">2026-03-10 05:30</div>
<div class="abs" style="left:1639px;top:601px;width:55px;height:23px;background:#dcfce7;border-radius:12px"></div>
<div class="tx" style="left:1648.20px;top:603.45px;font-size:14px;line-height:20px;font-weight:400;color:#166534;">Active</div>
<svg class="ic abs" style="left:1781px;top:605px;color:#2563eb;" width="16" height="16" viewBox="0 0 24 24" stroke-width="2"><path d="M12 3H5a2 2 0 0 0-2 2v14a2 2 0 0 0 2 2h14a2 2 0 0 0 2-2v-7"/><path d="M18.375 2.625a1 1 0 0 1 3 3l-9.013 9.014a2 2 0 0 1-.853.505l-2.873.84a.5.5 0 0 1-.62-.62l.84-2.873a2 2 0 0 1 .506-.852z"/></svg>
<svg class="ic abs" style="left:1817px;top:605px;color:#b91c1c;" width="16" height="16" viewBox="0 0 24 24" stroke-width="2"><path d="M3 6h18"/><path d="M19 6v14c0 1-1 2-2 2H7c-1 0-2-1-2-2V6"/><path d="M8 6V4c0-1 1-2 2-2h4c1 0 2 1 2 2v2"/><line x1="10" x2="10" y1="11" y2="17"/><line x1="14" x2="14" y1="11" y2="17"/></svg>
<div class="abs" style="left:273px;top:646px;width:1622px;height:65px;background:#fff;border-bottom:1px solid #e8e8e8"></div>
<div class="tx" style="left:290.60px;top:668.45px;font-size:14px;line-height:20px;font-weight:400;color:#171717;letter-spacing:-0.132px;">Technology Enhanced Learning - Class XI</div>
<div class="tx" style="left:722.40px;top:668.45px;font-size:14px;line-height:20px;font-weight:400;color:#171717;letter-spacing:-0.431px;">Class XI - Class XI - Section A</div>
<div class="tx" style="left:1031.80px;top:668.45px;font-size:14px;line-height:20px;font-weight:400;color:#171717;letter-spacing:-0.065px;">2024-25</div>
<div class="tx" style="left:1242.30px;top:668.45px;font-size:14px;line-height:20px;font-weight:400;color:#171717;letter-spacing:-0.125px;">4,200.00$</div>
<div class="tx" style="left:1443.80px;top:668.45px;font-size:14px;line-height:20px;font-weight:400;color:#171717;letter-spacing:-0.077px;">2026-05-23 05:30</div>
<div class="abs" style="left:1639px;top:666px;width:55px;height:23px;background:#dcfce7;border-radius:12px"></div>
<div class="tx" style="left:1648.20px;top:668.45px;font-size:14px;line-height:20px;font-weight:400;color:#166534;">Active</div>
<svg class="ic abs" style="left:1781px;top:670px;color:#2563eb;" width="16" height="16" viewBox="0 0 24 24" stroke-width="2"><path d="M12 3H5a2 2 0 0 0-2 2v14a2 2 0 0 0 2 2h14a2 2 0 0 0 2-2v-7"/><path d="M18.375 2.625a1 1 0 0 1 3 3l-9.013 9.014a2 2 0 0 1-.853.505l-2.873.84a.5.5 0 0 1-.62-.62l.84-2.873a2 2 0 0 1 .506-.852z"/></svg>
<svg class="ic abs" style="left:1817px;top:670px;color:#b91c1c;" width="16" height="16" viewBox="0 0 24 24" stroke-width="2"><path d="M3 6h18"/><path d="M19 6v14c0 1-1 2-2 2H7c-1 0-2-1-2-2V6"/><path d="M8 6V4c0-1 1-2 2-2h4c1 0 2 1 2 2v2"/><line x1="10" x2="10" y1="11" y2="17"/><line x1="14" x2="14" y1="11" y2="17"/></svg>
<div class="abs" style="left:273px;top:711px;width:1622px;height:65px;background:#fff;border-bottom:1px solid #e8e8e8"></div>
<div class="tx" style="left:290.60px;top:733.45px;font-size:14px;line-height:20px;font-weight:400;color:#171717;letter-spacing:-0.116px;">Scholarship Program Fee Structure - Class XI</div>
<div class="tx" style="left:722.40px;top:733.45px;font-size:14px;line-height:20px;font-weight:400;color:#171717;letter-spacing:-0.431px;">Class XI - Class XI - Section A</div>
<div class="tx" style="left:1031.80px;top:733.45px;font-size:14px;line-height:20px;font-weight:400;color:#171717;letter-spacing:-0.065px;">2024-25</div>
<div class="tx" style="left:1242.30px;top:733.45px;font-size:14px;line-height:20px;font-weight:400;color:#171717;letter-spacing:-0.125px;">6,000.00$</div>
<div class="tx" style="left:1443.80px;top:733.45px;font-size:14px;line-height:20px;font-weight:400;color:#171717;letter-spacing:-0.077px;">2026-04-17 05:30</div>
<div class="abs" style="left:1639px;top:731px;width:65px;height:23px;background:#fee2e2;border-radius:12px"></div>
<div class="tx" style="left:1647.20px;top:733.45px;font-size:14px;line-height:20px;font-weight:400;color:#991b1b;letter-spacing:0.020px;">Inactive</div>
<svg class="ic abs" style="left:1781px;top:735px;color:#2563eb;" width="16" height="16" viewBox="0 0 24 24" stroke-width="2"><path d="M12 3H5a2 2 0 0 0-2 2v14a2 2 0 0 0 2 2h14a2 2 0 0 0 2-2v-7"/><path d="M18.375 2.625a1 1 0 0 1 3 3l-9.013 9.014a2 2 0 0 1-.853.505l-2.873.84a.5.5 0 0 1-.62-.62l.84-2.873a2 2 0 0 1 .506-.852z"/></svg>
<svg class="ic abs" style="left:1817px;top:735px;color:#b91c1c;" width="16" height="16" viewBox="0 0 24 24" stroke-width="2"><path d="M3 6h18"/><path d="M19 6v14c0 1-1 2-2 2H7c-1 0-2-1-2-2V6"/><path d="M8 6V4c0-1 1-2 2-2h4c1 0 2 1 2 2v2"/><line x1="10" x2="10" y1="11" y2="17"/><line x1="14" x2="14" y1="11" y2="17"/></svg>
<div class="abs" style="left:273px;top:776px;width:1622px;height:65px;background:#fff;border-bottom:1px solid #e8e8e8"></div>
<div class="tx" style="left:290.60px;top:798.45px;font-size:14px;line-height:20px;font-weight:400;color:#171717;letter-spacing:-0.149px;">Scholarship Program Fee Structure - Class X</div>
<div class="tx" style="left:722.40px;top:798.45px;font-size:14px;line-height:20px;font-weight:400;color:#171717;letter-spacing:-0.433px;">Class X - Class X - Section A</div>
<div class="tx" style="left:1031.80px;top:798.45px;font-size:14px;line-height:20px;font-weight:400;color:#171717;letter-spacing:-0.065px;">2024-25</div>
<div class="tx" style="left:1242.30px;top:798.45px;font-size:14px;line-height:20px;font-weight:400;color:#171717;letter-spacing:-0.125px;">6,000.00$</div>
<div class="tx" style="left:1443.80px;top:798.45px;font-size:14px;line-height:20px;font-weight:400;color:#171717;letter-spacing:-0.077px;">2026-05-06 05:30</div>
<div class="abs" style="left:1639px;top:796px;width:65px;height:23px;background:#fee2e2;border-radius:12px"></div>
<div class="tx" style="left:1647.20px;top:798.45px;font-size:14px;line-height:20px;font-weight:400;color:#991b1b;letter-spacing:0.020px;">Inactive</div>
<svg class="ic abs" style="left:1781px;top:800px;color:#2563eb;" width="16" height="16" viewBox="0 0 24 24" stroke-width="2"><path d="M12 3H5a2 2 0 0 0-2 2v14a2 2 0 0 0 2 2h14a2 2 0 0 0 2-2v-7"/><path d="M18.375 2.625a1 1 0 0 1 3 3l-9.013 9.014a2 2 0 0 1-.853.505l-2.873.84a.5.5 0 0 1-.62-.62l.84-2.873a2 2 0 0 1 .506-.852z"/></svg>
<svg class="ic abs" style="left:1817px;top:800px;color:#b91c1c;" width="16" height="16" viewBox="0 0 24 24" stroke-width="2"><path d="M3 6h18"/><path d="M19 6v14c0 1-1 2-2 2H7c-1 0-2-1-2-2V6"/><path d="M8 6V4c0-1 1-2 2-2h4c1 0 2 1 2 2v2"/><line x1="10" x2="10" y1="11" y2="17"/><line x1="14" x2="14" y1="11" y2="17"/></svg>
<div class="abs" style="left:273px;top:841px;width:1622px;height:65px;background:#fff;border-bottom:1px solid #e8e8e8"></div>
<div class="tx" style="left:289.60px;top:863.45px;font-size:14px;line-height:20px;font-weight:400;color:#171717;letter-spacing:-0.144px;">Premium All-Inclusive Package - Class XI</div>
<div class="tx" style="left:722.40px;top:863.45px;font-size:14px;line-height:20px;font-weight:400;color:#171717;letter-spacing:-0.431px;">Class XI - Class XI - Section A</div>
<div class="tx" style="left:1031.80px;top:863.45px;font-size:14px;line-height:20px;font-weight:400;color:#171717;letter-spacing:-0.065px;">2024-25</div>
<div class="tx" style="left:1242.30px;top:863.45px;font-size:14px;line-height:20px;font-weight:400;color:#171717;">23,500.00$</div>
<div class="tx" style="left:1443.80px;top:863.45px;font-size:14px;line-height:20px;font-weight:400;color:#171717;letter-spacing:-0.077px;">2026-05-07 05:30</div>
<div class="abs" style="left:1639px;top:861px;width:65px;height:23px;background:#fee2e2;border-radius:12px"></div>
<div class="tx" style="left:1647.20px;top:863.45px;font-size:14px;line-height:20px;font-weight:400;color:#991b1b;letter-spacing:0.020px;">Inactive</div>
<svg class="ic abs" style="left:1781px;top:865px;color:#2563eb;" width="16" height="16" viewBox="0 0 24 24" stroke-width="2"><path d="M12 3H5a2 2 0 0 0-2 2v14a2 2 0 0 0 2 2h14a2 2 0 0 0 2-2v-7"/><path d="M18.375 2.625a1 1 0 0 1 3 3l-9.013 9.014a2 2 0 0 1-.853.505l-2.873.84a.5.5 0 0 1-.62-.62l.84-2.873a2 2 0 0 1 .506-.852z"/></svg>
<svg class="ic abs" style="left:1817px;top:865px;color:#b91c1c;" width="16" height="16" viewBox="0 0 24 24" stroke-width="2"><path d="M3 6h18"/><path d="M19 6v14c0 1-1 2-2 2H7c-1 0-2-1-2-2V6"/><path d="M8 6V4c0-1 1-2 2-2h4c1 0 2 1 2 2v2"/><line x1="10" x2="10" y1="11" y2="17"/><line x1="14" x2="14" y1="11" y2="17"/></svg>
<div class="abs" style="left:273px;top:905px;width:1622px;height:2px;background:#e3e3e3"></div>
<div class="abs" style="left:1894px;top:205px;width:1px;height:702px;background:#e5e5e5"></div>
<div class="tx" style="left:297.10px;top:939.35px;font-size:14px;line-height:20px;font-weight:400;color:#6b7280;letter-spacing:0.102px;">Showing 1 to 10 of 97 results</div>
<div class="abs" style="left:1361.5px;top:933px;width:106px;height:31.5px;background:#fdfdfd;border:1px solid #ececec;border-radius:6px"></div>
<svg class="ic abs" style="left:1373.7px;top:940.7px;color:#71717a;" width="16" height="16" viewBox="0 0 24 24" stroke-width="1.8"><path d="m15 18-6-6 6-6"/></svg>
<div class="tx" style="left:1397.70px;top:939.35px;font-size:14px;line-height:20px;font-weight:400;color:#767676;letter-spacing:0.319px;">Previous</div>
<div class="abs" style="left:1480px;top:931px;width:32px;height:36px;background:#14b47f;border-radius:6px"></div>
<div class="tx" style="left:1492.00px;top:939.55px;font-size:14px;line-height:20px;font-weight:700;color:#fff;">1</div>
<div class="abs" style="left:1524px;top:931px;width:34px;height:36px;background:#fff;border:1px solid #e5e5e5;border-radius:6px"></div>
<div class="tx" style="left:1537.00px;top:939.55px;font-size:14px;line-height:20px;font-weight:700;color:#171717;">2</div>
<div class="abs" style="left:1570px;top:931px;width:34px;height:36px;background:#fff;border:1px solid #e5e5e5;border-radius:6px"></div>
<div class="tx" style="left:1583.00px;top:939.55px;font-size:14px;line-height:20px;font-weight:700;color:#171717;">3</div>
<div class="abs" style="left:1616px;top:931px;width:34px;height:36px;background:#fff;border:1px solid #e5e5e5;border-radius:6px"></div>
<div class="tx" style="left:1629.00px;top:939.55px;font-size:14px;line-height:20px;font-weight:700;color:#171717;">4</div>
<div class="abs" style="left:1662px;top:931px;width:33px;height:36px;background:#fff;border:1px solid #e5e5e5;border-radius:6px"></div>
<div class="tx" style="left:1674.50px;top:939.55px;font-size:14px;line-height:20px;font-weight:700;color:#171717;">5</div>
<div class="abs" style="left:1735px;top:931px;width:42px;height:36px;background:#fff;border:1px solid #e5e5e5;border-radius:6px"></div>
<div class="tx" style="left:1748.11px;top:939.55px;font-size:14px;line-height:20px;font-weight:700;color:#171717;">10</div>
<svg class="ic abs" style="left:1706.8px;top:940.8px;color:#171717;" width="16" height="16" viewBox="0 0 24 24" stroke-width="2"><circle cx="12" cy="12" r="1"/><circle cx="19" cy="12" r="1"/><circle cx="5" cy="12" r="1"/></svg>
<div class="abs" style="left:1789px;top:933px;width:82px;height:31px;background:#fff;border:1px solid #e5e5e5;border-radius:6px"></div>
<div class="tx" style="left:1803.40px;top:939.35px;font-size:14px;line-height:20px;font-weight:700;color:#171717;letter-spacing:-0.161px;">Next</div>
<svg class="ic abs" style="left:1842.1px;top:941px;color:#171717;" width="16" height="16" viewBox="0 0 24 24" stroke-width="2"><path d="m9 18 6-6-6-6"/></svg></div>
</body></html>
